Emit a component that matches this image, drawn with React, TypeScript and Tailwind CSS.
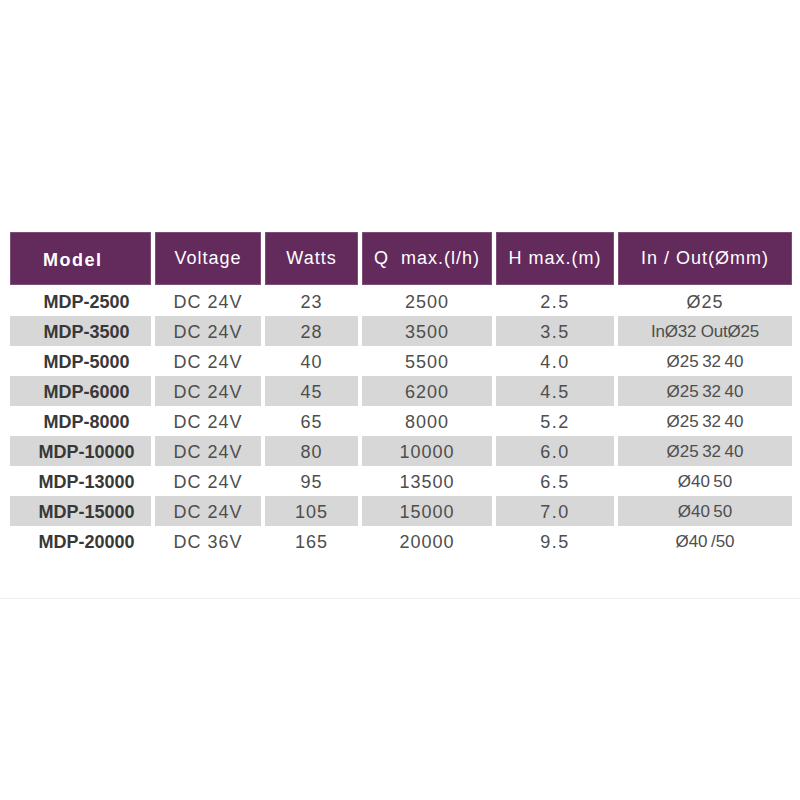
const HEAD = ["Model", "Voltage", "Watts", "Q  max.(l/h)", "H max.(m)", "In / Out(Ømm)"];

const ROWS = [
  ["MDP-2500", "DC 24V", "23", "2500", "2.5", "Ø25"],
  ["MDP-3500", "DC 24V", "28", "3500", "3.5", "InØ32 OutØ25"],
  ["MDP-5000", "DC 24V", "40", "5500", "4.0", "Ø25\u200932\u200940"],
  ["MDP-6000", "DC 24V", "45", "6200", "4.5", "Ø25\u200932\u200940"],
  ["MDP-8000", "DC 24V", "65", "8000", "5.2", "Ø25\u200932\u200940"],
  ["MDP-10000", "DC 24V", "80", "10000", "6.0", "Ø25\u200932\u200940"],
  ["MDP-13000", "DC 24V", "95", "13500", "6.5", "Ø40\u200950"],
  ["MDP-15000", "DC 24V", "105", "15000", "7.0", "Ø40\u200950"],
  ["MDP-20000", "DC 36V", "165", "20000", "9.5", "Ø40\u2009/50"],
];

const COLS = "grid grid-cols-[141px_106px_93px_130px_118px_174px] gap-x-1";

function cellText(ci: number, c: string) {
  if (ci === 0) return "pl-[12px] text-[18px] font-bold text-[#383838]";
  if (ci === 4) return "text-[18px] text-[#4e4e4e] tracking-[1.5px]";
  if (ci === 5) {
    if (c === "Ø25") return "text-[18px] text-[#4e4e4e] tracking-[1px]";
    if (c.startsWith("In")) return "text-[17px] text-[#4e4e4e] tracking-[-0.2px]";
    return "text-[17px] text-[#4e4e4e]";
  }
  return "text-[18px] text-[#4e4e4e] tracking-[1px]";
}

export default function App() {
  return (
    <div className="w-[800px] h-[800px] bg-white font-['Liberation_Sans',Arial,sans-serif]">
      <div className="pt-[232px] pl-[10px]">
        {/* Header */}
        <div className={`${COLS} h-[53px] mb-px`}>
          {HEAD.map((h, i) => (
            <div
              key={h}
              className={
                i === 0
                  ? "bg-[#632a5c] border border-[#7d4f77] flex items-center pl-[32px] pt-[3px] text-white text-[18px] font-bold tracking-[1.5px]"
                  : "bg-[#632a5c] border border-[#7d4f77] flex items-center justify-center text-white text-[18px] tracking-[1px] whitespace-pre"
              }
            >
              {h}
            </div>
          ))}
        </div>

        {/* Body */}
        {ROWS.map((r, ri) => (
          <div key={r[0]} className={`${COLS} h-[30px]`}>
            {r.map((c, ci) => (
              <div
                key={ci}
                className={`flex items-center justify-center pt-[2px] ${ri % 2 === 1 ? "bg-[#d7d7d7]" : ""} ${cellText(ci, c)}`}
              >
                {c}
              </div>
            ))}
          </div>
        ))}
      </div>

      <div className="mt-[42px] h-px bg-[#f1f1f1]" />
    </div>
  );
}
